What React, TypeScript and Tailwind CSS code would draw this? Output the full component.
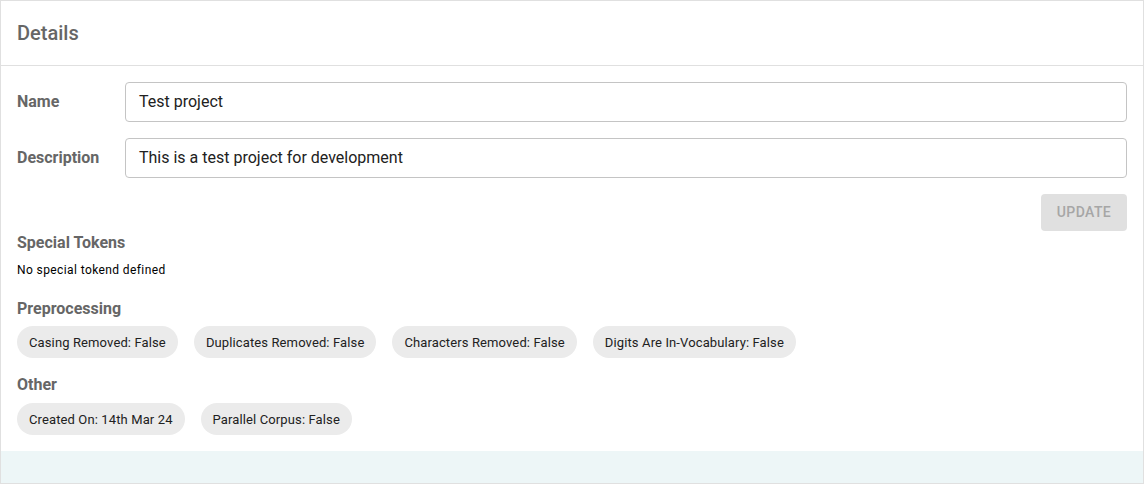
import React from "react";

const Chip = ({ text }: { text: string }) => (
  <div className="h-8 rounded-full bg-[#ebebeb] px-3 flex items-center text-[13px] tracking-[0.12px] text-[#212121] leading-none">
    {text}
  </div>
);

const Heading = ({ children }: { children: React.ReactNode }) => (
  <div className="h-6 flex items-center text-[16px] font-bold text-[#666666]">{children}</div>
);

export default function App() {
  return (
    <div className="w-[1144px] h-[484px] bg-white" style={{ fontFamily: "Roboto, 'Noto Sans', sans-serif" }}>
      <div className="h-full border border-[#e0e0e0] flex flex-col">
        <div className="h-[65px] border-b border-[#e0e0e0] flex items-center px-4">
          <div className="text-[20px] font-medium text-[#666666]">Details</div>
        </div>
        <div className="flex-1 px-4 pt-4 pb-4 flex flex-col">
          <div className="flex items-center">
            <div className="w-[108px] text-[16px] font-bold text-[#666666]">Name</div>
            <div className="flex-1 h-10 border border-[#c4c4c4] rounded-[4px] flex items-center px-[13px] text-[16px] text-[#212121]">
              Test project
            </div>
          </div>
          <div className="flex items-center mt-4">
            <div className="w-[108px] text-[16px] font-bold text-[#666666]">Description</div>
            <div className="flex-1 h-10 border border-[#c4c4c4] rounded-[4px] flex items-center px-[13px] text-[16px] text-[#212121]">
              This is a test project for development
            </div>
          </div>
          <div className="flex justify-end mt-4">
            <div className="h-[37px] w-[86px] rounded-[4px] bg-[#e0e0e0] flex items-center justify-center text-[14px] font-medium tracking-[0.4px] text-[#a6a6a6]">
              UPDATE
            </div>
          </div>
          <div>
            <Heading>Special Tokens</Heading>
            <div className="mt-[6px] h-[18px] flex items-center text-[12px] tracking-[0.4px] text-black">No special tokend defined</div>
          </div>
          <div className="mt-[18px]">
            <Heading>Preprocessing</Heading>
            <div className="mt-[5px] flex gap-4">
              <Chip text="Casing Removed: False" />
              <Chip text="Duplicates Removed: False" />
              <Chip text="Characters Removed: False" />
              <Chip text="Digits Are In-Vocabulary: False" />
            </div>
          </div>
          <div className="mt-[15px]">
            <Heading>Other</Heading>
            <div className="mt-[6px] flex gap-4">
              <Chip text="Created On: 14th Mar 24" />
              <Chip text="Parallel Corpus: False" />
            </div>
          </div>
        </div>
        <div className="h-8 bg-[#edf6f7]" />
      </div>
    </div>
  );
}
